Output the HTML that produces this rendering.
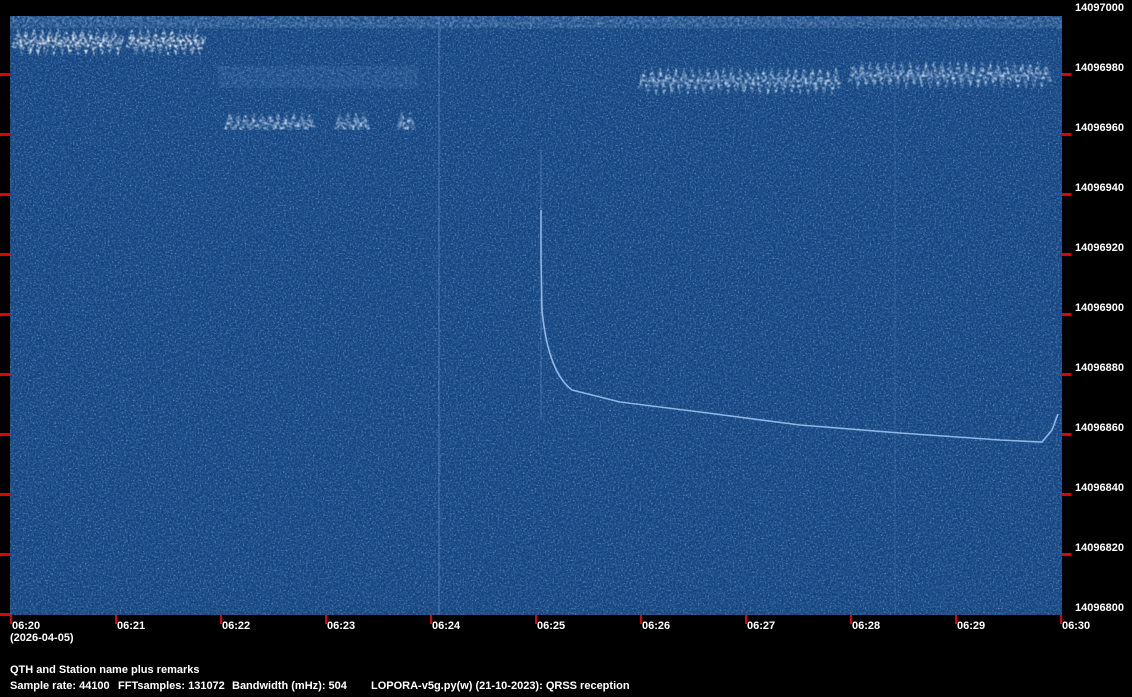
<!DOCTYPE html>
<html><head><meta charset="utf-8">
<style>
html,body{margin:0;padding:0;background:#000;width:1132px;height:697px;overflow:hidden}
svg{display:block}
text{font-family:"Liberation Sans",sans-serif;font-weight:bold;font-size:11px;fill:#fff}
</style></head><body>
<svg width="1132" height="697" viewBox="0 0 1132 697" xmlns="http://www.w3.org/2000/svg">
<defs>
<filter id="n" x="0" y="0" width="100%" height="100%">
<feTurbulence type="fractalNoise" baseFrequency="0.6" numOctaves="2" seed="3" result="t"/>
<feColorMatrix in="t" type="matrix" values="0 0 0 0 0.20  0 0 0 0 0.38  0 0 0 0 0.65  2.4 0 0 0 -1.35" result="c"/>
<feComposite in="c" in2="SourceGraphic" operator="in"/>
</filter>
<filter id="d" x="0" y="0" width="100%" height="100%">
<feTurbulence type="fractalNoise" baseFrequency="0.5" numOctaves="2" seed="11" result="t"/>
<feColorMatrix in="t" type="matrix" values="0 0 0 0 0.02  0 0 0 0 0.10  0 0 0 0 0.28  2.8 0 0 0 -1.0" result="c"/>
<feComposite in="c" in2="SourceGraphic" operator="in"/>
</filter>
<filter id="s" x="0" y="0" width="100%" height="100%">
<feTurbulence type="fractalNoise" baseFrequency="0.4" numOctaves="1" seed="7" result="t"/>
<feColorMatrix in="t" type="matrix" values="0 0 0 0 0  0 0 0 0 0  0 0 0 0 0  3 0 0 0 -1.2" result="m"/>
<feComposite in="SourceGraphic" in2="m" operator="in" result="o"/>
<feGaussianBlur in="o" stdDeviation="0.5"/>
</filter>
</defs>
<rect x="10" y="16" width="1052" height="599" fill="#13427f"/>
<rect x="10" y="16" width="1052" height="599" fill="#fff" filter="url(#d)"/>
<rect x="10" y="16" width="1052" height="599" fill="#fff" filter="url(#n)"/>
<g filter="url(#s)">
<rect x="10" y="16" width="1052" height="12" fill="#9fc0e6" opacity="0.5"/>
<path d="M14 48 l4 -12 l4 12 l4 -12 l4 12 l4 -12 l4 12 l4 -12 l4 12 l4 -12 l4 12 l4 -12 l4 12 l4 -12 l4 12 l4 -12 l4 12 l4 -12 l4 12 l4 -12 l4 12 l4 -12 l4 12 l4 -12 l4 12 l4 -12 l4 12 l4 -12 M128 48 l4 -12 l4 12 l4 -12 l4 12 l4 -12 l4 12 l4 -12 l4 12 l4 -12 l4 12 l4 -12 l4 12 l4 -12 l4 12 l4 -12 l4 12 l4 -12 l4 12 l4 -12" stroke="#ffffff" stroke-width="5" fill="none"/>
<rect x="218" y="66" width="200" height="22" fill="#7fa4d4" opacity="0.35"/>
<path d="M226 130 l4 -12 l4 12 l4 -12 l4 12 l4 -12 l4 12 l4 -12 l4 12 l4 -12 l4 12 l4 -12 l4 12 l4 -12 l4 12 l4 -12 l4 12 l4 -12 l4 12 l4 -12 l4 12 l4 -12 l4 12 M336 130 l4 -12 l4 12 l4 -12 l4 12 l4 -12 l4 12 l4 -12 l4 12 M398 130 l4 -12 l4 12 l4 -12 l4 12" stroke="#c8dcf4" stroke-width="4" fill="none"/>
<path d="M640 88 l4 -14 l4 14 l4 -14 l4 14 l4 -14 l4 14 l4 -14 l4 14 l4 -14 l4 14 l4 -14 l4 14 l4 -14 l4 14 l4 -14 l4 14 l4 -14 l4 14 l4 -14 l4 14 l4 -14 l4 14 l4 -14 l4 14 l4 -14 l4 14 l4 -14 l4 14 l4 -14 l4 14 l4 -14 l4 14 l4 -14 l4 14 l4 -14 l4 14 l4 -14 l4 14 l4 -14 l4 14 l4 -14 l4 14 l4 -14 l4 14 l4 -14 l4 14 l4 -14 l4 14 l4 -14 l4 14 M850 82 l4 -16 l4 16 l4 -14 l4 14 l4 -14 l4 14 l4 -14 l4 14 l4 -14 l4 14 l4 -14 l4 14 l4 -14 l4 14 l4 -14 l4 14 l4 -14 l4 14 l4 -14 l4 14 l4 -14 l4 14 l4 -14 l4 14 l4 -14 l4 14 l4 -14 l4 14 l4 -14 l4 14 l4 -14 l4 14 l4 -14 l4 14 l4 -14 l4 14 l4 -14 l4 14 l4 -14 l4 14 l4 -14 l4 14 l4 -14 l4 14 l4 -14 l4 14 l4 -14 l4 14 l4 -14 l4 14" stroke="#c8dcf4" stroke-width="4" fill="none"/>
</g>
<g stroke="#7fa6d8" fill="none" stroke-width="1">
<line x1="439" y1="16" x2="439" y2="615" opacity="0.5"/>
<line x1="541" y1="150" x2="541" y2="420" opacity="0.4"/>
<line x1="895" y1="16" x2="895" y2="615" opacity="0.2"/>
</g>
<path d="M541 210 L541 260 L542 310 Q548 372 572 390 L620 402 L700 412 L800 425 L900 433 L1000 440 L1042 442 L1052 430 L1058 414" stroke="#8fb6e4" stroke-width="1.6" fill="none"/>
<g fill="#e00000">
<rect x="0" y="73" width="10" height="3"/><rect x="0" y="133" width="10" height="3"/><rect x="0" y="193" width="10" height="3"/><rect x="0" y="253" width="10" height="3"/><rect x="0" y="313" width="10" height="3"/><rect x="0" y="373" width="10" height="3"/><rect x="0" y="433" width="10" height="3"/><rect x="0" y="493" width="10" height="3"/><rect x="0" y="553" width="10" height="3"/><rect x="0" y="613" width="10" height="3"/>
<rect x="1062" y="73" width="9" height="3"/><rect x="1062" y="133" width="9" height="3"/><rect x="1062" y="193" width="9" height="3"/><rect x="1062" y="253" width="9" height="3"/><rect x="1062" y="313" width="9" height="3"/><rect x="1062" y="373" width="9" height="3"/><rect x="1062" y="433" width="9" height="3"/><rect x="1062" y="493" width="9" height="3"/><rect x="1062" y="553" width="9" height="3"/>
<rect x="10" y="615" width="2" height="9"/><rect x="115" y="615" width="2" height="9"/><rect x="220" y="615" width="2" height="9"/><rect x="325" y="615" width="2" height="9"/><rect x="430" y="615" width="2" height="9"/><rect x="535" y="615" width="2" height="9"/><rect x="640" y="615" width="2" height="9"/><rect x="745" y="615" width="2" height="9"/><rect x="850" y="615" width="2" height="9"/><rect x="955" y="615" width="2" height="9"/><rect x="1060" y="615" width="2" height="9"/>
</g>
<g>
<text x="1075" y="11">14097000</text><text x="1075" y="71">14096980</text><text x="1075" y="131">14096960</text><text x="1075" y="191">14096940</text><text x="1075" y="251">14096920</text><text x="1075" y="311">14096900</text><text x="1075" y="371">14096880</text><text x="1075" y="431">14096860</text><text x="1075" y="491">14096840</text><text x="1075" y="551">14096820</text><text x="1075" y="611">14096800</text>
<text x="12" y="629">06:20</text><text x="117" y="629">06:21</text><text x="222" y="629">06:22</text><text x="327" y="629">06:23</text><text x="432" y="629">06:24</text><text x="537" y="629">06:25</text><text x="642" y="629">06:26</text><text x="747" y="629">06:27</text><text x="852" y="629">06:28</text><text x="957" y="629">06:29</text><text x="1062" y="629">06:30</text>
<text x="10" y="641">(2026-04-05)</text>
<text x="10" y="673">QTH and Station name plus remarks</text>
<text x="10" y="689">Sample rate: 44100</text>
<text x="118" y="689">FFTsamples: 131072</text>
<text x="232" y="689">Bandwidth (mHz): 504</text>
<text x="371" y="689">LOPORA-v5g.py(w) (21-10-2023): QRSS reception</text>
</g>
</svg>
</body></html>
